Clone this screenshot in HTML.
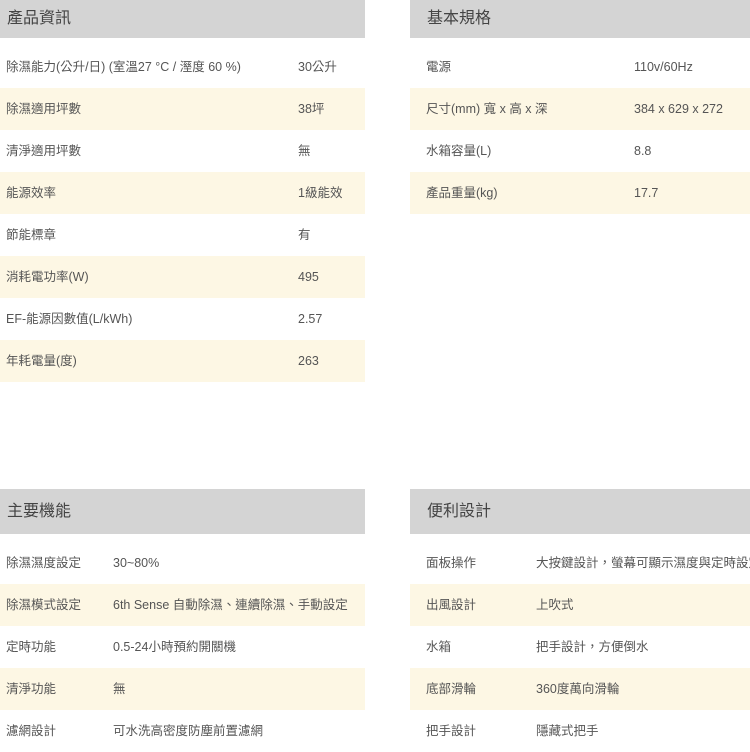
<!DOCTYPE html>
<html><head><meta charset="utf-8"><style>
*{margin:0;padding:0;box-sizing:border-box}
body{width:750px;height:742px;background:#fff;overflow:hidden;position:relative;font-family:"Liberation Sans","Noto Sans CJK TC",sans-serif;color:#555}
.h{position:absolute;height:45px;background:#d4d4d4;font-size:16px;line-height:45px;padding-left:7px;color:#444}
.r{position:absolute;height:42px;font-size:12.5px;line-height:42px}
.r.c{background:#fdf7e4}
.r span{position:absolute;top:0;white-space:nowrap}
</style></head><body>
<div class="h" style="left:0;top:-7px;width:365px;line-height:45px;padding-top:0"><span style="position:relative;top:3px">產品資訊</span></div>
<div class="h" style="left:410px;top:-7px;width:340px;padding-left:17px"><span style="position:relative;top:3px">基本規格</span></div>

<div class="r" style="left:0;top:46px;width:365px"><span style="left:6px">除濕能力(公升/日) (室溫27 °C / 溼度 60 %)</span><span style="left:298px">30公升</span></div>
<div class="r c" style="left:0;top:88px;width:365px"><span style="left:6px">除濕適用坪數</span><span style="left:298px">38坪</span></div>
<div class="r" style="left:0;top:130px;width:365px"><span style="left:6px">清淨適用坪數</span><span style="left:298px">無</span></div>
<div class="r c" style="left:0;top:172px;width:365px"><span style="left:6px">能源效率</span><span style="left:298px">1級能效</span></div>
<div class="r" style="left:0;top:214px;width:365px"><span style="left:6px">節能標章</span><span style="left:298px">有</span></div>
<div class="r c" style="left:0;top:256px;width:365px"><span style="left:6px">消耗電功率(W)</span><span style="left:298px">495</span></div>
<div class="r" style="left:0;top:298px;width:365px"><span style="left:6px">EF-能源因數值(L/kWh)</span><span style="left:298px">2.57</span></div>
<div class="r c" style="left:0;top:340px;width:365px"><span style="left:6px">年耗電量(度)</span><span style="left:298px">263</span></div>

<div class="r" style="left:410px;top:46px;width:340px"><span style="left:16px">電源</span><span style="left:224px">110v/60Hz</span></div>
<div class="r c" style="left:410px;top:88px;width:340px"><span style="left:16px">尺寸(mm) 寬 x 高 x 深</span><span style="left:224px">384 x 629 x 272</span></div>
<div class="r" style="left:410px;top:130px;width:340px"><span style="left:16px">水箱容量(L)</span><span style="left:224px">8.8</span></div>
<div class="r c" style="left:410px;top:172px;width:340px"><span style="left:16px">產品重量(kg)</span><span style="left:224px">17.7</span></div>

<div class="h" style="left:0;top:489px;width:365px">主要機能</div>
<div class="h" style="left:410px;top:489px;width:340px;padding-left:17px">便利設計</div>

<div class="r" style="left:0;top:542px;width:365px"><span style="left:6px">除濕濕度設定</span><span style="left:113px">30~80%</span></div>
<div class="r c" style="left:0;top:584px;width:365px"><span style="left:6px">除濕模式設定</span><span style="left:113px">6th Sense 自動除濕、連續除濕、手動設定</span></div>
<div class="r" style="left:0;top:626px;width:365px"><span style="left:6px">定時功能</span><span style="left:113px">0.5-24小時預約開關機</span></div>
<div class="r c" style="left:0;top:668px;width:365px"><span style="left:6px">清淨功能</span><span style="left:113px">無</span></div>
<div class="r" style="left:0;top:710px;width:365px"><span style="left:6px">濾網設計</span><span style="left:113px">可水洗高密度防塵前置濾網</span></div>

<div class="r" style="left:410px;top:542px;width:340px;overflow:hidden"><span style="left:16px">面板操作</span><span style="left:126px">大按鍵設計，螢幕可顯示濕度與定時設定</span></div>
<div class="r c" style="left:410px;top:584px;width:340px"><span style="left:16px">出風設計</span><span style="left:126px">上吹式</span></div>
<div class="r" style="left:410px;top:626px;width:340px"><span style="left:16px">水箱</span><span style="left:126px">把手設計，方便倒水</span></div>
<div class="r c" style="left:410px;top:668px;width:340px"><span style="left:16px">底部滑輪</span><span style="left:126px">360度萬向滑輪</span></div>
<div class="r" style="left:410px;top:710px;width:340px"><span style="left:16px">把手設計</span><span style="left:126px">隱藏式把手</span></div>
</body></html>
